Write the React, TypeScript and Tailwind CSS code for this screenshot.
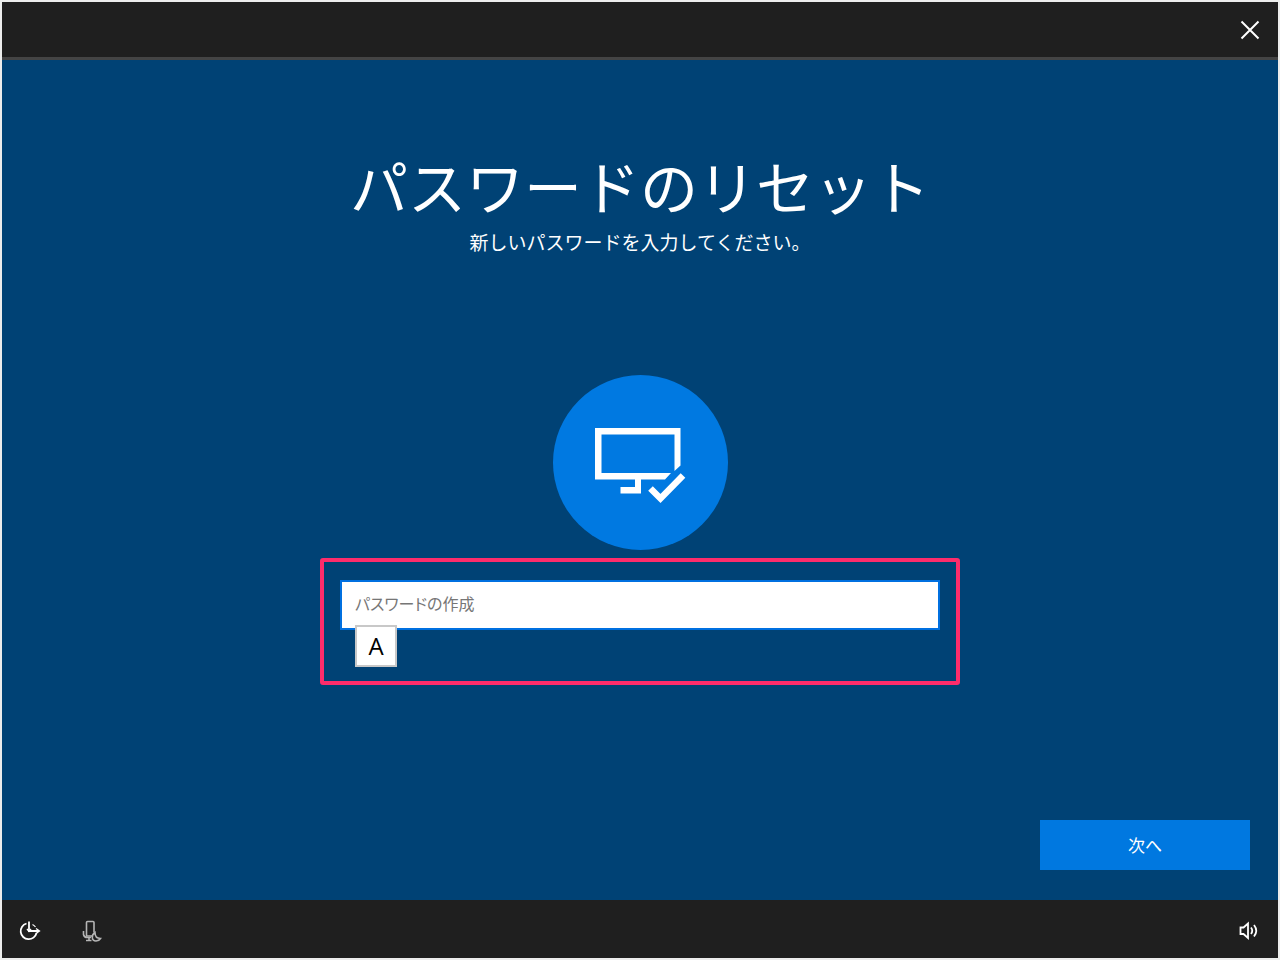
import { useState } from "react"
import type React from "react"

const TitleBar: React.FC = () => (
  <header className="flex h-[58px] shrink-0 items-center justify-end border-b-[3px] border-[#444444] bg-[#1f1f1f] pr-4">
    <button type="button" aria-label="閉じる" className="flex h-6 w-6 items-center justify-center text-white">
      <svg width="20" height="20" viewBox="0 0 20 20" fill="none" stroke="currentColor" strokeWidth="2">
        <path d="M1.5 1.5 18.5 18.5M18.5 1.5 1.5 18.5" />
      </svg>
    </button>
  </header>
)

const MonitorBadge: React.FC = () => (
  <div className="flex h-[175px] w-[175px] items-center justify-center rounded-full bg-[#0079e1]">
    <svg width="175" height="175" viewBox="0 0 175 175" aria-hidden="true">
      {/* Screen frame, cut away where the check mark passes */}
      <path
        fill="#fff"
        fillRule="evenodd"
        d="M42 53H127.500V90.500L121.500 96V59.500H48.500V98H118L112 104.500H88V118.500H67.500V112H82V104.500H42Z"
      />
      <path d="M97.500 113.500 107.500 123.500 130 100.500" fill="none" stroke="#fff" strokeWidth="6.5" />
    </svg>
  </div>
)

const PasswordForm: React.FC = () => {
  const [password, setPassword] = useState("")

  return (
    <div className="mt-2 w-full max-w-[640px] rounded-[3px] border-4 border-[#fd2c6b] px-4 pt-[18px] pb-[51px]">
      <div className="relative">
        <input
          type="password"
          aria-label="パスワードの作成"
          value={password}
          onChange={(e) => setPassword(e.target.value)}
          placeholder="パスワードの作成"
          className="block h-[50px] w-full border-2 border-[#0070e0] bg-white px-[13px] pb-1 text-[16px] text-black outline-none [font-feature-settings:'palt'] placeholder:text-[#767676]"
        />
        {/* IME mode indicator */}
        <div className="absolute top-[45px] left-[15px] flex h-[42px] w-[42px] items-center justify-center border-2 border-[#c8c8c8] bg-white font-['Open_Sans','Noto_Sans_CJK_JP',sans-serif] text-[24px] leading-none text-black">
          A
        </div>
      </div>
    </div>
  )
}

const StatusBar: React.FC = () => (
  <footer className="flex h-[58px] shrink-0 items-center justify-between bg-[#1f1f1f] px-4 pt-1 text-white">
    <div className="flex items-center gap-10">
      <button type="button" aria-label="コンピューターの簡単操作">
        <svg width="24" height="22" viewBox="0 0 24 22" fill="none" stroke="currentColor" strokeWidth="1.8">
          <path d="M8.500 3.500A8 8 0 1 0 18.500 13" />
          <path d="M14.500 4.500A8 8 0 0 1 17.500 7" strokeWidth="1.200" />
          <path d="M11 1.500V11H21" />
          <path d="M9 9 11 11.500 13 9M18 8.500 21.500 11 18 13.500" strokeWidth="1.300" />
        </svg>
      </button>
      <button type="button" aria-label="マイク" className="text-[#b5b5b5]">
        <svg width="22" height="22" viewBox="0 0 22 22" fill="none" stroke="currentColor" strokeWidth="1.600">
          <path d="M10 16H4.500V2.500Q4.500 1.500 5.500 1.500H11Q12 1.500 12 2.500V12.500" />
          <path d="M1.500 11V14.500Q2 17.500 5.500 17.500H9M7 17.500V20.500M4 20.500H9.500" />
          <path d="M13 12.500C9 15 9.500 21 14 21Q17 21 18.500 18.500C15 18.500 13 16 13 12.500Z" />
        </svg>
      </button>
    </div>
    <button type="button" aria-label="音量" className="mr-0.5">
      <svg width="22" height="20" viewBox="0 0 22 20" fill="none" stroke="currentColor" strokeWidth="1.800">
        <path d="M2.500 6.500H5.500L10 2.500V17L5.500 13H2.500Z" />
        <path d="M13 6.500Q15.500 9.750 13 13M16 4Q20.500 9.750 16 15.500" />
      </svg>
    </button>
  </footer>
)

export default function App() {
  return (
    <div
      lang="ja"
      className="flex min-h-screen flex-col border-2 border-[#ecedec] bg-[#004275] font-['Noto_Sans_CJK_JP',sans-serif]"
    >
      <TitleBar />
      <main className="flex flex-1 flex-col items-center px-7 pt-[89px] pb-[30px] text-white">
        <h1 className="text-[58px] leading-[72px]">パスワードのリセット</h1>
        <p className="mt-[7px] text-[19px] leading-7">新しいパスワードを入力してください。</p>
        <div className="mt-[119px]">
          <MonitorBadge />
        </div>
        <PasswordForm />
        <button type="button" className="mt-auto h-[50px] w-[210px] self-end bg-[#0078e0] text-[17px] text-white">
          次へ
        </button>
      </main>
      <StatusBar />
    </div>
  )
}
